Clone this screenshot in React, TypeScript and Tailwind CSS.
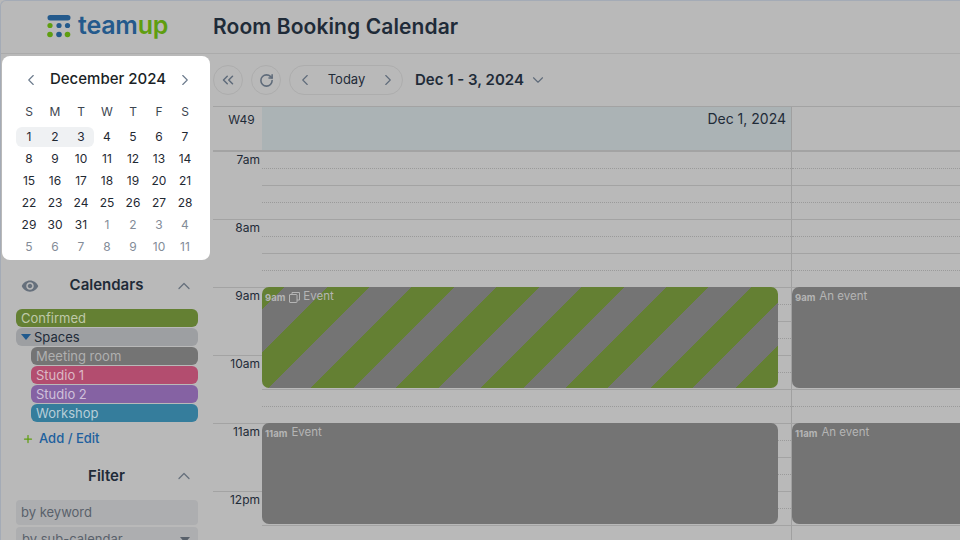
import { ChevronDown, ChevronLeft, ChevronRight, ChevronUp, ChevronsLeft, Plus, RotateCw } from 'lucide-react';

const weeks = [
  ['1', '2', '3', '4', '5', '6', '7'],
  ['8', '9', '10', '11', '12', '13', '14'],
  ['15', '16', '17', '18', '19', '20', '21'],
  ['22', '23', '24', '25', '26', '27', '28'],
  ['29', '30', '31', '1', '2', '3', '4'],
  ['5', '6', '7', '8', '9', '10', '11'],
];

const Logo = () => (
  <div className="flex items-center gap-[7px]">
    <svg width="24" height="24" viewBox="0 0 24 24">
      <rect x="0.5" y="0" width="23" height="5.5" rx="2.75" fill="#245a8c" />
      <circle cx="3" cy="10.5" r="2.6" fill="#5f9e10" />
      <circle cx="12" cy="10.5" r="2.6" fill="#245a8c" />
      <circle cx="20.5" cy="10.5" r="2.6" fill="#245a8c" />
      <circle cx="3" cy="19.5" r="2.8" fill="#5f9e10" />
      <circle cx="12" cy="19.5" r="2.8" fill="#245a8c" />
      <circle cx="20.5" cy="19.5" r="2.8" fill="#5f9e10" />
    </svg>
    <span className="text-[25px] leading-none font-semibold tracking-[-0.2px] mb-[2px]">
      <span className="text-[#245a8c]">team</span>
      <span className="text-[#5f9e10]">up</span>
    </span>
  </div>
);

const MiniCalendar = () => (
  <div className="w-[208px] h-[204px] ml-[2px] shrink-0 bg-white rounded-lg">
    <div className="flex items-center justify-between h-[45px] pl-[20px] pr-[16px] pt-[2px]">
      <ChevronLeft size={18} strokeWidth={1.5} className="text-[#6b7a8c]" />
      <span className="text-[15px] font-medium text-[#1a1f26]">December 2024</span>
      <ChevronRight size={18} strokeWidth={1.5} className="text-[#6b7a8c]" />
    </div>
    <div className="grid grid-cols-[repeat(7,26px)] pl-[14px] h-[22px] items-center text-center text-[12px] text-[#3d4550]">
      {['S', 'M', 'T', 'W', 'T', 'F', 'S'].map((d, i) => (
        <span key={i}>{d}</span>
      ))}
    </div>
    <div className="relative pl-[14px] mt-[3px]">
      <div className="absolute left-[14px] top-[1px] w-[78px] h-[20px] bg-[#eff1f3] rounded-md" />
      {weeks.map((week, w) => (
        <div key={w} className="relative grid grid-cols-[repeat(7,26px)] h-[22px] items-center text-center text-[12px]">
          {week.map((day, i) => {
            const muted = (w === 4 && i > 2) || w === 5;
            return (
              <span key={i} className={muted ? 'text-[#838c98]' : 'text-[#1f2933]'}>
                {day}
              </span>
            );
          })}
        </div>
      ))}
    </div>
  </div>
);

const Chip = ({ label, bg, text, indent }: { label: string; bg: string; text: string; indent?: boolean }) => (
  <div className={`h-[18px] shrink-0 flex items-center rounded-[6px] text-[13px] leading-none px-[5px] ${bg} ${text} ${indent ? 'ml-[15px]' : ''}`}>
    {label}
  </div>
);

const Sidebar = () => (
  <div className="w-[213px] shrink-0 flex flex-col overflow-hidden">
    <div className="h-[2px] shrink-0" />
    <MiniCalendar />
    <div className="flex items-center h-[49px] shrink-0 pl-[21px] pr-[19px] pt-[2px]">
      <svg width="18" height="18" viewBox="0 0 24 24" fill="#66707c">
        <path d="M12 4.5C7 4.5 2.73 7.61 1 12c1.73 4.39 6 7.5 11 7.5s9.27-3.11 11-7.5c-1.73-4.39-6-7.5-11-7.5zM12 17c-2.76 0-5-2.24-5-5s2.24-5 5-5 5 2.24 5 5-2.24 5-5 5zm0-8c-1.66 0-3 1.34-3 3s1.34 3 3 3 3-1.34 3-3-1.34-3-3-3z" />
      </svg>
      <span className="flex-1 text-center text-[15px] font-semibold text-[#1f2b38]">Calendars</span>
      <ChevronUp size={20} strokeWidth={1.5} className="text-[#66707c]" />
    </div>
    <div className="flex flex-col gap-[1px] ml-[16px] w-[182px] shrink-0">
      <Chip label="Confirmed" bg="bg-[#648033]" text="text-[#bfc9a8]" />
      <div className="h-[18px] shrink-0 flex items-center rounded-[6px] text-[13px] leading-none pl-[5px] bg-[#9d9fa2] text-[#1f2b38]">
        <span className="w-0 h-0 mr-[3px] border-x-[5px] border-x-transparent border-t-[6px] border-t-[#205a8e]" />
        Spaces
      </div>
      <Chip indent label="Meeting room" bg="bg-[#747474]" text="text-[#b0b0b0]" />
      <Chip indent label="Studio 1" bg="bg-[#b34d6f]" text="text-[#dcb9c5]" />
      <Chip indent label="Studio 2" bg="bg-[#8562a3]" text="text-[#cfc0da]" />
      <Chip indent label="Workshop" bg="bg-[#357d9c]" text="text-[#b7ced8]" />
    </div>
    <div className="flex items-center gap-[5px] h-[18px] shrink-0 mt-[8px] pl-[22px] text-[13px] font-medium text-[#20609e]">
      <Plus size={12} strokeWidth={2.5} className="text-[#5f9e10]" />
      Add / Edit
    </div>
    <div className="flex items-center h-[24px] shrink-0 mt-[16px] pl-[21px] pr-[19px]">
      <span className="w-[18px]" />
      <span className="flex-1 text-center text-[15px] font-semibold text-[#1f2b38]">Filter</span>
      <ChevronUp size={20} strokeWidth={1.5} className="text-[#66707c]" />
    </div>
    <div className="flex flex-col gap-[2px] mt-[12px] ml-[16px] w-[182px] shrink-0">
      <div className="h-[25px] shrink-0 flex items-center bg-[#adaeb0] rounded-[4px] px-[5px] text-[13px] text-[#59616b]">by keyword</div>
      <div className="h-[25px] shrink-0 flex items-center justify-between bg-[#adaeb0] rounded-[4px] pl-[6px] pr-[8px] text-[13px] text-[#59616b]">
        by sub-calendar
        <span className="w-0 h-0 border-x-[5px] border-x-transparent border-t-[6px] border-t-[#59616b]" />
      </div>
    </div>
  </div>
);

const Toolbar = () => (
  <div className="flex items-center h-[52px] shrink-0">
    <div className="w-[30px] h-[30px] rounded-full border border-[#adadad] flex items-center justify-center">
      <ChevronsLeft size={18} strokeWidth={2} className="text-[#5f6b7a]" />
    </div>
    <div className="w-[30px] h-[30px] ml-[8px] rounded-full border border-[#adadad] flex items-center justify-center">
      <RotateCw size={15} strokeWidth={2.5} className="text-[#5f6b7a]" />
    </div>
    <div className="h-[30px] ml-[8px] w-[114px] rounded-full border border-[#adadad] flex items-center justify-between pl-[6px] pr-[5px]">
      <ChevronLeft size={18} strokeWidth={1.5} className="text-[#5f6b7a]" />
      <span className="text-[13px] text-[#1f2b38] mb-[1px]">Today</span>
      <ChevronRight size={18} strokeWidth={1.5} className="text-[#5f6b7a]" />
    </div>
    <span className="ml-[12px] text-[15px] font-semibold text-[#1f2b38]">Dec 1 - 3, 2024</span>
    <ChevronDown size={18} strokeWidth={1.5} className="ml-[5px] text-[#5f6b7a]" />
  </div>
);

const Slots = ({ right }: { right?: boolean }) => (
  <div className={`flex flex-col ${right ? 'flex-1' : 'w-[530px] shrink-0 border-r border-[#a0a0a0]'}`}>
    <div className="h-[17px] shrink-0 border-b border-dotted border-[#9a9a9a]" />
    <div className="h-[17px] shrink-0 border-b border-[#a3a3a3]" />
    <div className="h-[17px] shrink-0 border-b border-dotted border-[#9a9a9a]" />
    <div className="flex-1" />
  </div>
);

const Hour = ({ label, first }: { label: string; first?: boolean }) => (
  <div className={`flex shrink-0 ${first ? 'h-[67px]' : 'h-[68px] border-t border-[#a3a3a3]'}`}>
    <div className="w-[49px] shrink-0 text-right pr-[2px] text-[12px] leading-[16px] text-[#1f2b38]">{label}</div>
    <div className="flex-1 flex">
      <Slots />
      <Slots right />
    </div>
  </div>
);

const Event = ({ time, title, className, copy }: { time: string; title: string; className: string; copy?: boolean }) => (
  <div className={`absolute rounded-[7px] flex items-start gap-[4px] pl-[3px] pt-[2px] text-[#b5b5b5] ${className}`}>
    <span className="text-[9.5px] font-bold leading-[17px]">{time}</span>
    {copy && (
      <svg width="11" height="11" viewBox="0 0 11 11" fill="none" stroke="currentColor" strokeWidth="1" className="mt-[3px] -mr-[1px]">
        <rect x="0.5" y="2.5" width="7.5" height="8" rx="0.5" />
        <path d="M3 2.5V0.5H10.5V8H8" />
      </svg>
    )}
    <span className="text-[11.5px] leading-[14px]">{title}</span>
  </div>
);

const Grid = () => (
  <div className="relative flex-1 border-t border-[#a3a3a3] overflow-hidden">
    <div className="flex h-[43px] border-b-2 border-[#a3a3a3] box-content">
      <div className="w-[49px] shrink-0 pt-[4px] text-center text-[12px] text-[#1f2b38] pl-[8px]">W49</div>
      <div className="w-[530px] shrink-0 bg-[#abb3b5] border-r border-[#a0a0a0] text-right pr-[5px] pt-[1px] text-[14px] text-[#1f2b38]">Dec 1, 2024</div>
      <div className="flex-1" />
    </div>
    <Hour first label="7am" />
    <Hour label="8am" />
    <Hour label="9am" />
    <Hour label="10am" />
    <Hour label="11am" />
    <Hour label="12pm" />
    <Event
      time="9am"
      title="Event"
      copy
      className="left-[49px] top-[180px] w-[516px] h-[101px] bg-[repeating-linear-gradient(135deg,#648033_0_16px,#747474_16px_46px,#648033_46px_60px)]"
    />
    <Event time="9am" title="An event" className="left-[579px] top-[180px] w-[200px] h-[101px] bg-[#747474]" />
    <Event time="11am" title="Event" className="left-[49px] top-[316px] w-[516px] h-[101px] bg-[#747474]" />
    <Event time="11am" title="An event" className="left-[579px] top-[316px] w-[200px] h-[101px] bg-[#747474]" />
  </div>
);

export default function App() {
  return (
    <div className="relative w-[960px] h-[540px] overflow-hidden bg-[#b9b9b9] font-['Inter',sans-serif] flex flex-col">
      <div className="h-[54px] shrink-0 flex items-center border-b border-[#ababab]">
        <div className="w-[213px] shrink-0 pl-[47px]">
          <Logo />
        </div>
        <h1 className="text-[21px] tracking-[0.1px] font-semibold text-[#1f2b38]">Room Booking Calendar</h1>
      </div>
      <div className="flex flex-1 min-h-0">
        <Sidebar />
        <div className="flex-1 flex flex-col min-w-0">
          <Toolbar />
          <Grid />
        </div>
      </div>
      {/* window edge */}
      <div className="absolute inset-0 border-l border-t border-[#a4abb6] rounded-tl-md pointer-events-none" />
    </div>
  );
}
